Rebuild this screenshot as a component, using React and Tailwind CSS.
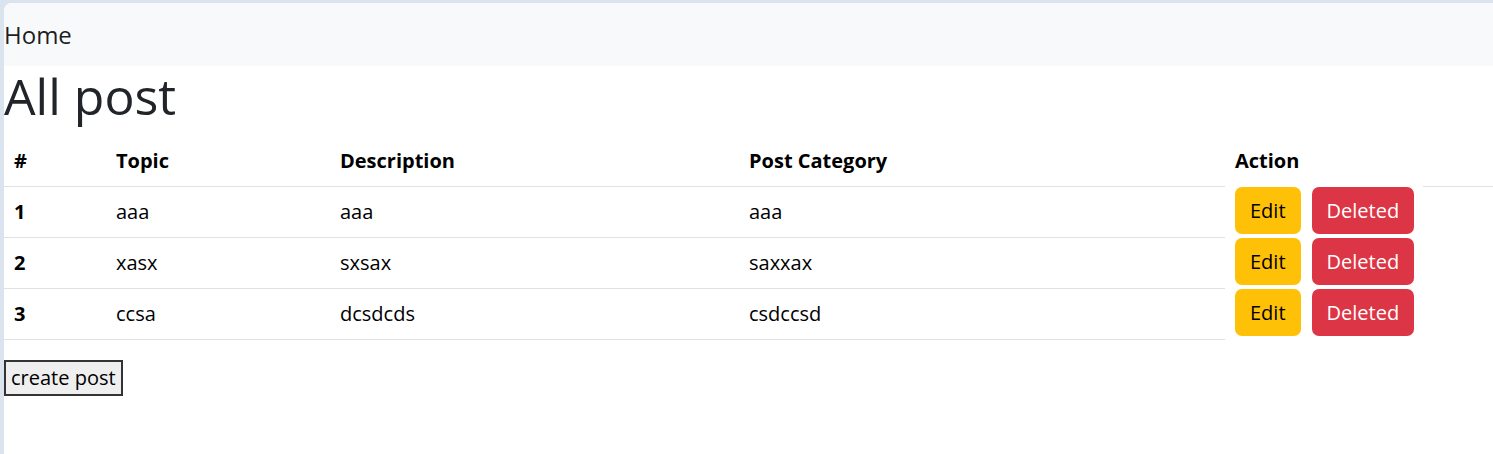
import React from "react";

const rows = [
  { id: 1, topic: "aaa", desc: "aaa", cat: "aaa" },
  { id: 2, topic: "xasx", desc: "sxsax", cat: "saxxax" },
  { id: 3, topic: "ccsa", desc: "dcsdcds", cat: "csdccsd" },
];

export default function App() {
  return (
    <div className="h-[454px] w-[1493px] overflow-hidden bg-[#dbe4ee] pl-[4px] pt-[3px] font-['Open_Sans',sans-serif]">
      <div className="h-full overflow-hidden rounded-tl-[8px] bg-white">
        <nav className="flex h-[63px] items-center bg-[#f8f9fa]">
          <span className="text-[24px] leading-[36px] text-black/90">Home</span>
        </nav>
        <h1 className="mb-[10px] text-[50px] font-medium leading-[60px] text-[#212529]">All post</h1>
        <table className="w-full table-fixed border-separate border-spacing-0 text-[20px] leading-[30px] text-black">
          <colgroup>
            <col className="w-[102px]" />
            <col className="w-[224px]" />
            <col className="w-[409px]" />
            <col className="w-[486px]" />
            <col />
          </colgroup>
          <thead>
            <tr>
              <th className="border-b border-[#dee2e6] p-[10px] text-left font-bold">#</th>
              <th className="border-b border-[#dee2e6] p-[10px] text-left font-bold">Topic</th>
              <th className="border-b border-[#dee2e6] p-[10px] text-left font-bold">Description</th>
              <th className="border-b border-[#dee2e6] p-[10px] text-left font-bold">Post Category</th>
              <th className="border-b border-transparent bg-[linear-gradient(#dee2e6,#dee2e6)] bg-[length:70px_1px] bg-[position:right_bottom] bg-no-repeat bg-origin-border p-[10px] text-left font-bold">
                Action
              </th>
            </tr>
          </thead>
          <tbody>
            {rows.map((r) => (
              <tr key={r.id}>
                <th className="border-b border-[#dee2e6] p-[10px] text-left font-bold">{r.id}</th>
                <td className="border-b border-[#dee2e6] p-[10px]">{r.topic}</td>
                <td className="border-b border-[#dee2e6] p-[10px]">{r.desc}</td>
                <td className="border-b border-[#dee2e6] p-[10px]">{r.cat}</td>
                <td className="p-0 align-top">
                  <div className="flex">
                    <button className="ml-[10px] h-[47px] rounded-[7px] bg-[#ffc107] px-[15px] text-[20px] leading-[30px] text-black">
                      Edit
                    </button>
                    <button className="ml-[11px] h-[47px] rounded-[7px] bg-[#dc3545] px-[15px] text-[20px] leading-[30px] text-white">
                      Deleted
                    </button>
                  </div>
                </td>
              </tr>
            ))}
          </tbody>
        </table>
        <button className="mt-[20px] h-[36px] border-2 border-[#333] bg-[#efefef] px-[5px] text-[20px] leading-[28px] text-black">
          create post
        </button>
      </div>
    </div>
  );
}
